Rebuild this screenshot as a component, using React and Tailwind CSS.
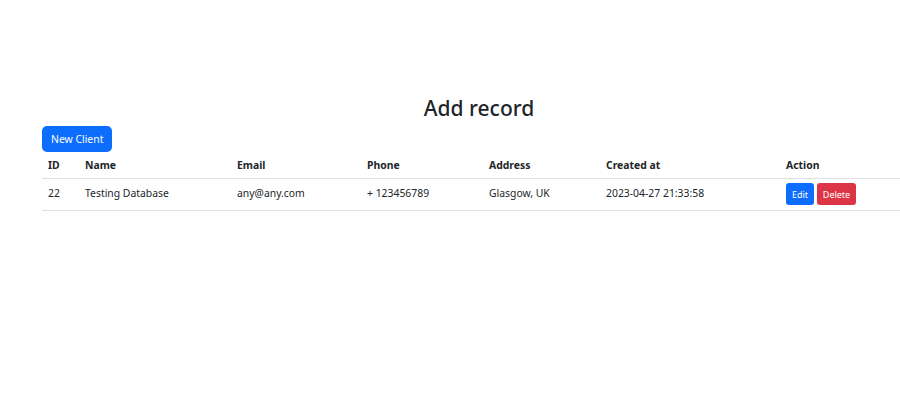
export default function App() {
    const rows = [
        {
            id: 22,
            name: "Testing Database",
            email: "any@any.com",
            phone: "+ 123456789",
            address: "Glasgow, UK",
            createdAt: "2023-04-27 21:33:58",
        },
    ];

    return (
        <div className="w-full h-[400px] overflow-hidden bg-white text-[#212529] font-['Noto_Sans',sans-serif]">
            <div className="ml-[42px] w-[874px] pt-[93px]">
                <h1 className="text-center text-[21px] leading-[30px] font-medium mb-[2px]">Add record</h1>
                <button className="h-[26px] px-[9px] rounded-[5px] bg-[#0d6efd] text-white text-[10.4px] leading-none">
                    New Client
                </button>

                <table className="w-full table-fixed border-collapse text-[10.4px] mt-px">
                    <colgroup>
                        <col className="w-[37px]" />
                        <col className="w-[152px]" />
                        <col className="w-[130px]" />
                        <col className="w-[122px]" />
                        <col className="w-[117px]" />
                        <col className="w-[180px]" />
                        <col className="w-[136px]" />
                    </colgroup>
                    <thead>
                        <tr className="h-[25px] border-b border-[#dee2e6] text-left">
                            <th className="px-[6px] font-bold">ID</th>
                            <th className="px-[6px] font-bold">Name</th>
                            <th className="px-[6px] font-bold">Email</th>
                            <th className="px-[6px] font-bold">Phone</th>
                            <th className="px-[6px] font-bold">Address</th>
                            <th className="px-[6px] font-bold">Created at</th>
                            <th className="px-[6px] font-bold">Action</th>
                        </tr>
                    </thead>
                    <tbody>
                        {rows.map((r) => (
                            <tr key={r.id} className="h-[32px] border-b border-[#dee2e6]">
                                <td className="px-[6px]">{r.id}</td>
                                <td className="px-[6px]">{r.name}</td>
                                <td className="px-[6px]">{r.email}</td>
                                <td className="px-[6px]">{r.phone}</td>
                                <td className="px-[6px]">{r.address}</td>
                                <td className="px-[6px]">{r.createdAt}</td>
                                <td className="px-[6px]">
                                    <div className="flex gap-[3px]">
                                        <button className="h-[22px] w-[28px] rounded-[3px] bg-[#0d6efd] text-white text-[9px] leading-none">
                                            Edit
                                        </button>
                                        <button className="h-[22px] w-[39px] rounded-[3px] bg-[#dc3545] text-white text-[9px] leading-none">
                                            Delete
                                        </button>
                                    </div>
                                </td>
                            </tr>
                        ))}
                    </tbody>
                </table>
            </div>
        </div>
    );
}
